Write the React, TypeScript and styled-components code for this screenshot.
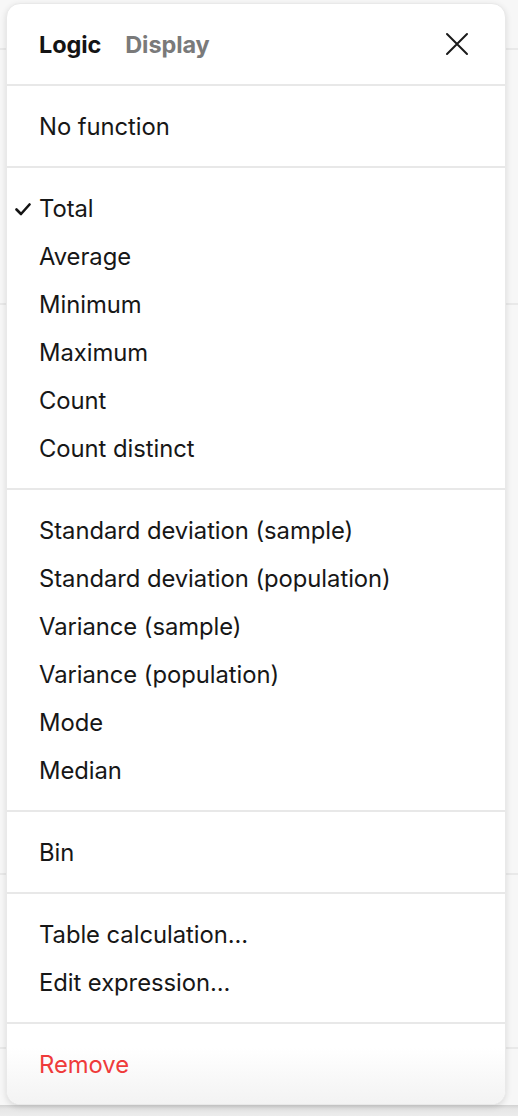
import React from "react";
import styled, { createGlobalStyle } from "styled-components";

const Global = createGlobalStyle`
  html, body { margin: 0; padding: 0; }
  body {
    background: #f7f7f7;
    font-family: Inter, "Noto Sans", "Liberation Sans", sans-serif;
    -webkit-font-smoothing: antialiased;
  }
`;

const Page = styled.div`
  position: relative;
  width: 518px;
  height: 1116px;
  overflow: hidden;
  background: #f7f7f7;
`;

const Backdrop = styled.div`
  display: flex;
  flex-direction: column;
  height: 100%;
`;

const BgRow = styled.div<{ $h: number; $line?: boolean }>`
  height: ${(p) => p.$h}px;
  flex: none;
  border-bottom: ${(p) => (p.$line ? "2px solid #e9e9e9" : "none")};
  box-sizing: border-box;
`;

const BgFooter = styled.div`
  flex: 1;
  background: linear-gradient(#d2d2d2 0px, #e6e6e6 4px, #ececec 100%);
`;

const Panel = styled.div`
  position: absolute;
  top: 3px;
  left: 6px;
  width: 500px;
  box-sizing: border-box;
  background: #ffffff;
  border: 1px solid #e9e9e9;
  border-radius: 14px;
  box-shadow: 0 2px 6px rgba(0, 0, 0, 0.12);
  overflow: hidden;
  display: flex;
  flex-direction: column;
`;

const Header = styled.div`
  height: 80px;
  display: flex;
  align-items: center;
  padding: 0 32px;
  gap: 24px;
  box-sizing: border-box;
`;

const Tab = styled.span<{ $active?: boolean }>`
  font-size: 23.5px;
  font-weight: 700;
  color: ${(p) => (p.$active ? "#141414" : "#7a7a7a")};
  letter-spacing: -0.1px;
`;

const Spacer = styled.div`
  flex: 1;
`;

const CloseButton = styled.button`
  border: none;
  background: none;
  padding: 0;
  width: 26px;
  height: 26px;
  display: flex;
  align-items: center;
  justify-content: center;
  margin-right: 3px;
  cursor: pointer;
`;

const Divider = styled.div`
  height: 2px;
  background: #e8e8e8;
  flex: none;
`;

const Section = styled.div<{ $fade?: boolean }>`
  padding: 16px 0;
  display: flex;
  flex-direction: column;
  background: ${(p) =>
    p.$fade ? "linear-gradient(#ffffff 30%, #f3f3f3 100%)" : "#ffffff"};
`;

const Item = styled.div<{ $danger?: boolean }>`
  position: relative;
  height: 48px;
  display: flex;
  align-items: center;
  padding-left: 32px;
  font-size: 23.8px;
  font-weight: 400;
  color: ${(p) => (p.$danger ? "#ef3b3b" : "#171717")};
  letter-spacing: -0.05px;
`;

const Check = styled.svg`
  position: absolute;
  left: 8px;
  top: 50%;
  margin-top: -5px;
  width: 16px;
  height: 13px;
`;

const sections: { label: string; checked?: boolean; danger?: boolean }[][] = [
  [{ label: "No function" }],
  [
    { label: "Total", checked: true },
    { label: "Average" },
    { label: "Minimum" },
    { label: "Maximum" },
    { label: "Count" },
    { label: "Count distinct" },
  ],
  [
    { label: "Standard deviation (sample)" },
    { label: "Standard deviation (population)" },
    { label: "Variance (sample)" },
    { label: "Variance (population)" },
    { label: "Mode" },
    { label: "Median" },
  ],
  [{ label: "Bin" }],
  [{ label: "Table calculation..." }, { label: "Edit expression..." }],
  [{ label: "Remove", danger: true }],
];

export default function App() {
  return (
    <>
      <Global />
      <Page>
        <Backdrop>
          <BgRow $h={50} $line />
          <BgRow $h={255} $line />
          <BgRow $h={570} $line />
          <BgRow $h={174} $line />
          <BgRow $h={56} />
          <BgFooter />
        </Backdrop>
        <Panel>
          <Header>
            <Tab $active>Logic</Tab>
            <Tab>Display</Tab>
            <Spacer />
            <CloseButton aria-label="Close">
              <svg width="24" height="24" viewBox="0 0 24 24">
                <path
                  d="M2 2 L22 22 M22 2 L2 22"
                  stroke="#1a1a1a"
                  strokeWidth="2"
                  strokeLinecap="round"
                  fill="none"
                />
              </svg>
            </CloseButton>
          </Header>
          {sections.map((items, i) => (
            <React.Fragment key={i}>
              <Divider />
              <Section $fade={i === sections.length - 1}>
                {items.map((it) => (
                  <Item key={it.label} $danger={it.danger}>
                    {it.checked && (
                      <Check viewBox="0 0 16 13">
                        <path
                          d="M1.5 6.5 L6 11 L14.5 1.5"
                          stroke="#141414"
                          strokeWidth="2.6"
                          strokeLinecap="round"
                          strokeLinejoin="round"
                          fill="none"
                        />
                      </Check>
                    )}
                    {it.label}
                  </Item>
                ))}
              </Section>
            </React.Fragment>
          ))}
        </Panel>
      </Page>
    </>
  );
}
